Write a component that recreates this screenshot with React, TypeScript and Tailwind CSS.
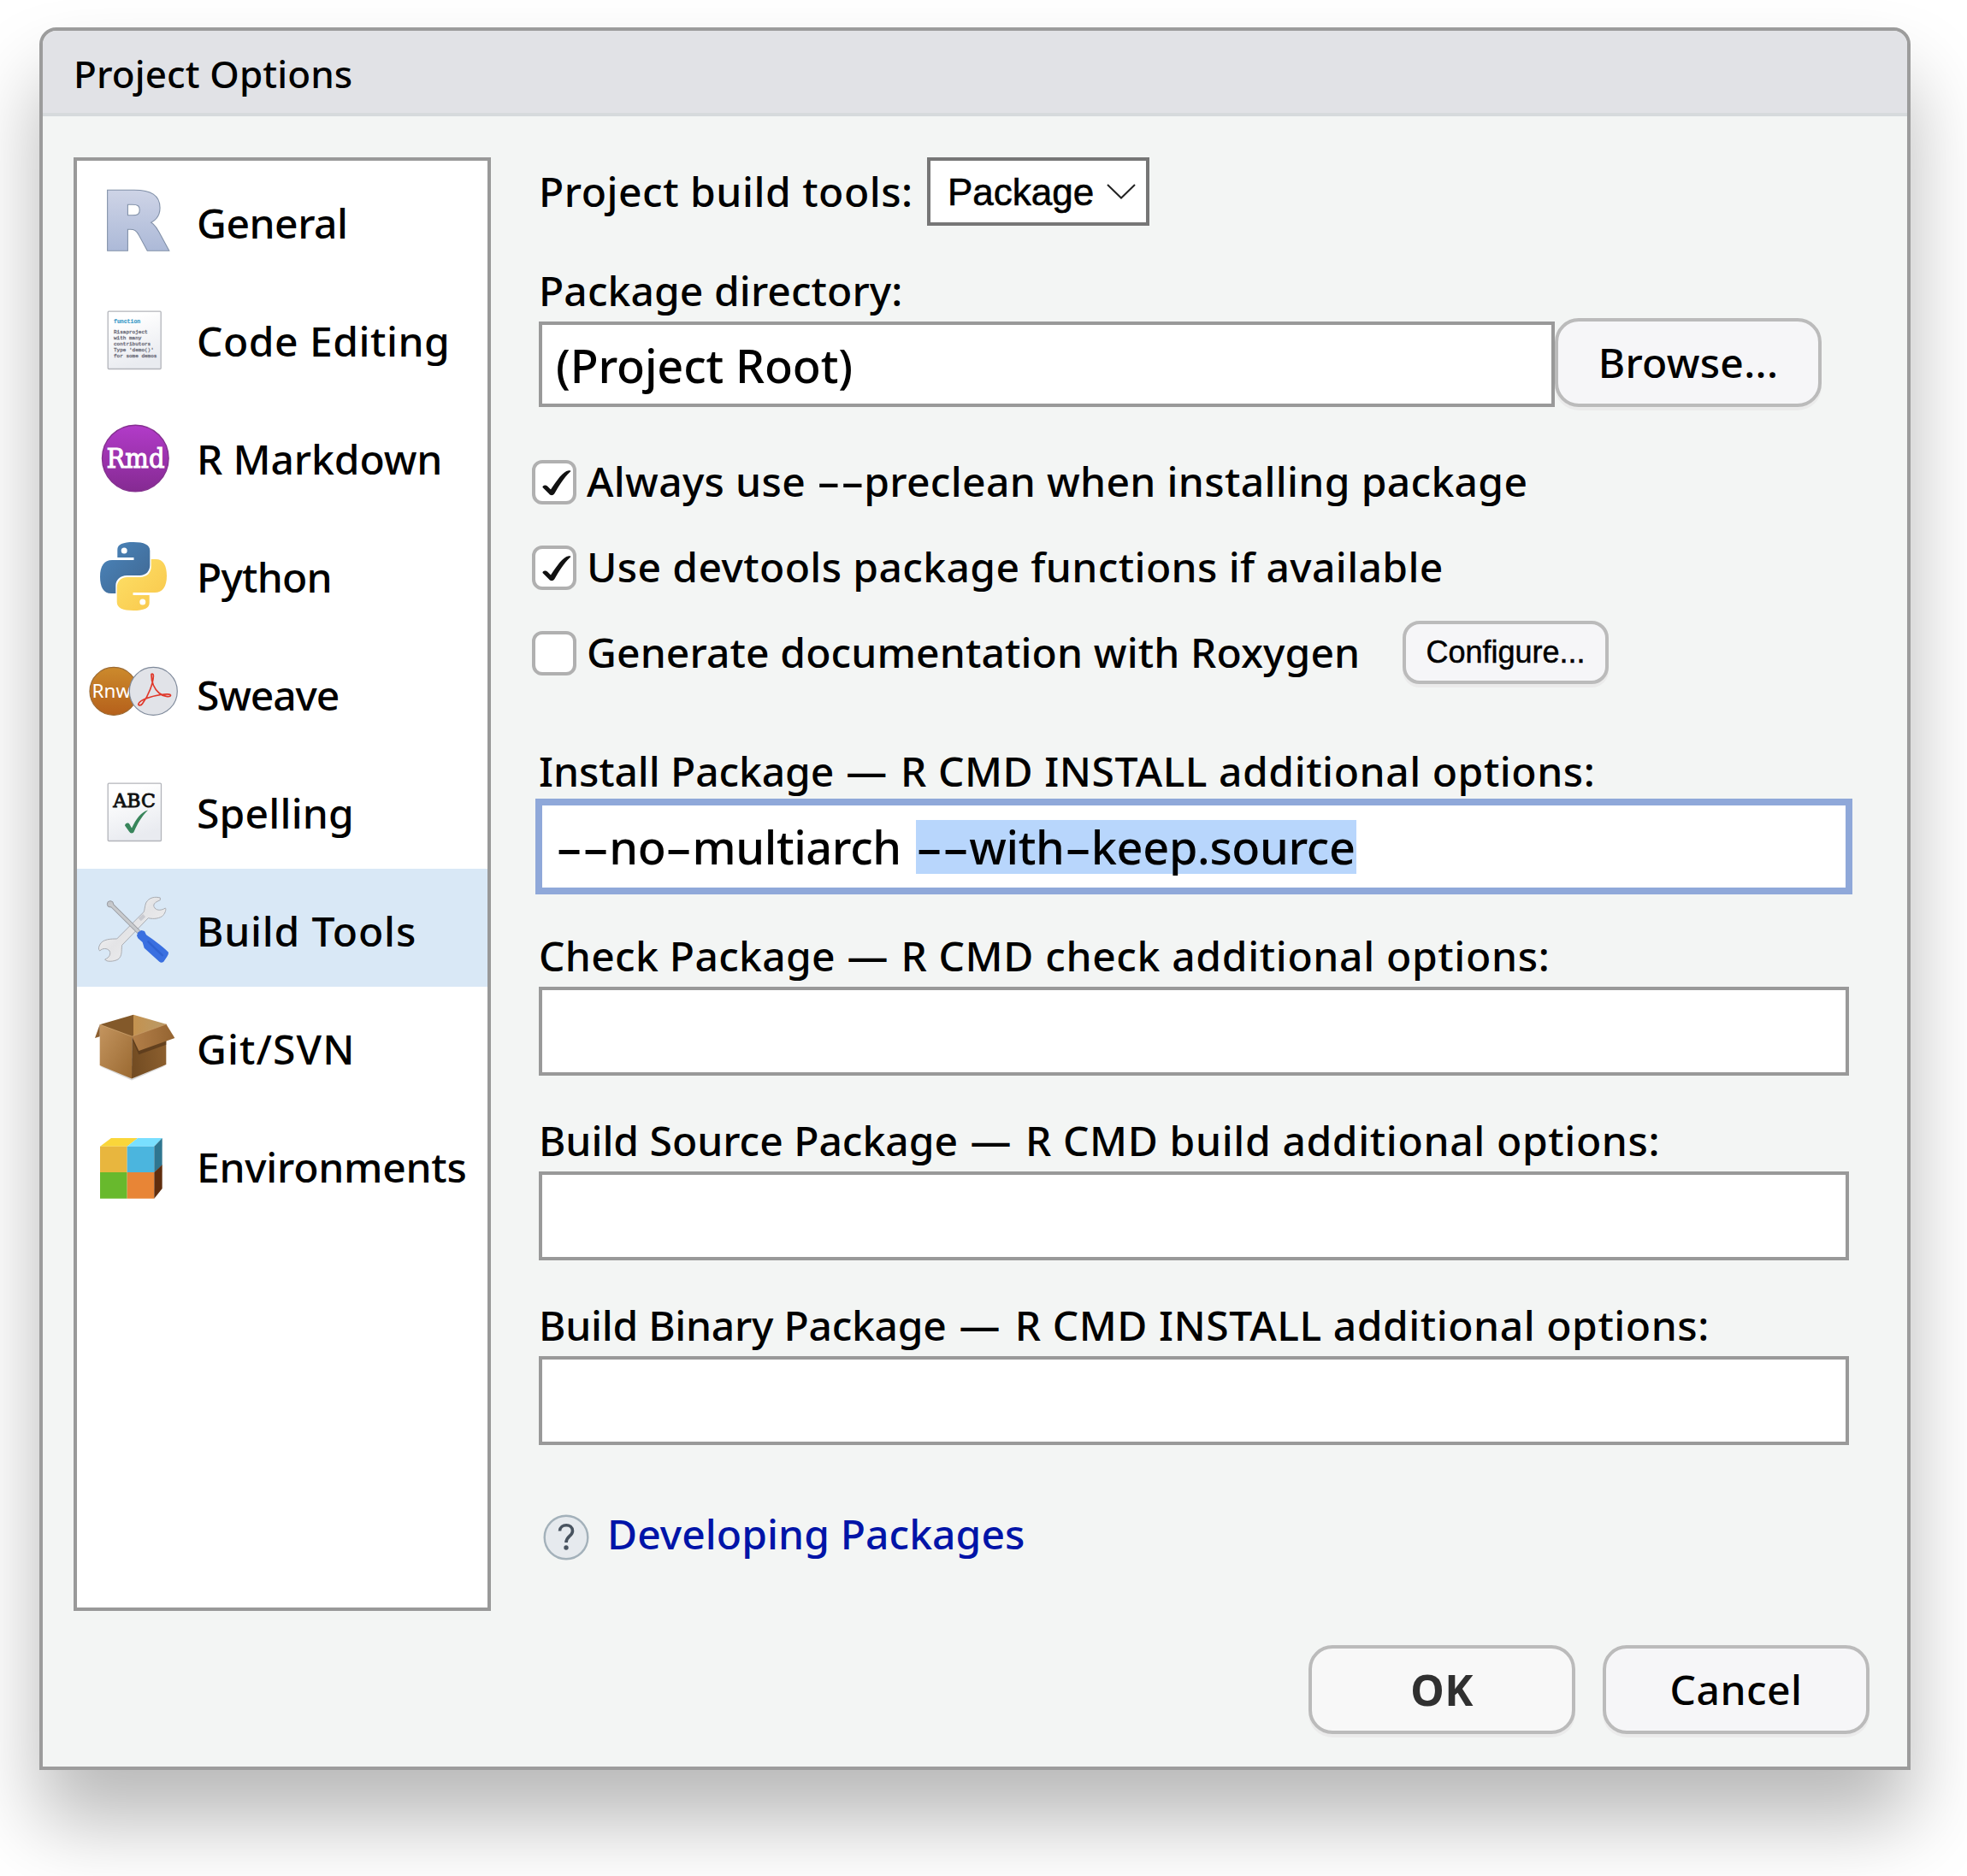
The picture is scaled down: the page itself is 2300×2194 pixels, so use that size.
import React from "react";

/* ---------- sidebar icons ---------- */

function IconFrame({ children }: { children: React.ReactNode }) {
  return (
    <svg viewBox="0 0 120 138" className="h-[138px] w-[120px] shrink-0">
      {children}
    </svg>
  );
}

function GeneralIcon() {
  return (
    <IconFrame>
      <defs>
        <linearGradient id="rFill" gradientUnits="userSpaceOnUse" x1="0" y1="-67" x2="0" y2="0">
          <stop offset="0" stopColor="#cdd3e6" />
          <stop offset="1" stopColor="#adbad8" />
        </linearGradient>
      </defs>
      <g
        transform="translate(19 103.3) scale(1.09 1)"
        className="font-['DejaVu_Sans',sans-serif] font-bold"
        fontSize="91.5"
      >
        <text stroke="#8190a8" strokeWidth="5.6" fill="#8190a8" aria-hidden="true">
          R
        </text>
        <text stroke="url(#rFill)" strokeWidth="3.6" fill="url(#rFill)">
          R
        </text>
      </g>
    </IconFrame>
  );
}

const CODE_LINES = ["Risaproject", "with many", "contributors", "Type 'demo()'", "for some demos"];

function CodeIcon() {
  return (
    <IconFrame>
      <defs>
        <linearGradient id="paper" x1="0" y1="0" x2="0.3" y2="1">
          <stop offset="0.2" stopColor="#ffffff" />
          <stop offset="1" stopColor="#e9ebf0" />
        </linearGradient>
      </defs>
      <rect x="26.2" y="38.2" width="62" height="67.3" rx="1" fill="url(#paper)" stroke="#b3b5bb" strokeWidth="1.3" />
      <text x="33" y="52" fontFamily="Liberation Mono" fontWeight="700" fontSize="6.5" fill="#3d9cc9" stroke="#3d9cc9" strokeWidth="0.2">
        function
      </text>
      {CODE_LINES.map((line, i) => (
        <text key={line} x="33" y={64 + i * 7} fontFamily="Liberation Mono" fontSize="6" fill="#6b6b78" stroke="#6b6b78" strokeWidth="0.3">
          {line}
        </text>
      ))}
    </IconFrame>
  );
}

function RmdIcon() {
  return (
    <IconFrame>
      <defs>
        <linearGradient id="rmdFill" x1="0" y1="0" x2="0" y2="1">
          <stop offset="0" stopColor="#b23bc9" />
          <stop offset="1" stopColor="#852a92" />
        </linearGradient>
      </defs>
      <circle cx="58.3" cy="72" r="38.8" fill="url(#rmdFill)" stroke="#84308f" strokeWidth="1.4" />
      <text
        x="24.5"
        y="82.6"
        fontFamily="DejaVu Serif"
        fontWeight="400"
        fontSize="32.5"
        fill="#fff"
        stroke="#fff"
        strokeWidth="1.1"
        textLength="68"
        lengthAdjust="spacingAndGlyphs"
      >
        Rmd
      </text>
    </IconFrame>
  );
}

const SNAKE =
  "M37.3 50V41C37.3 34.5 44 32 56 32C68.5 32 75.3 35 75.3 42V59C75.3 66 70.5 71 63.5 71H48.5C40.5 71 35.3 76 35.3 83V92H30C21 92 17 84.5 17 72.5C17 60 22 53 31 53H56.5V50Z";

function PythonIcon() {
  return (
    <IconFrame>
      <defs>
        <linearGradient id="pyBlue" x1="0" y1="0" x2="1" y2="1">
          <stop offset="0" stopColor="#4b86bd" />
          <stop offset="1" stopColor="#3f6690" />
        </linearGradient>
        <linearGradient id="pyYellow" x1="1" y1="1" x2="0" y2="0">
          <stop offset="0" stopColor="#fee168" />
          <stop offset="1" stopColor="#f8c64a" />
        </linearGradient>
      </defs>
      <path d={SNAKE} fill="url(#pyBlue)" />
      <circle cx="45.2" cy="42" r="3.5" fill="#fff" />
      <g transform="rotate(180 56 72)">
        <path d={SNAKE} fill="url(#pyYellow)" />
        <circle cx="45.2" cy="42" r="3.5" fill="#fff" />
      </g>
    </IconFrame>
  );
}

function SweaveIcon() {
  return (
    <IconFrame>
      <defs>
        <linearGradient id="rnwFill" x1="0" y1="0" x2="0" y2="1">
          <stop offset="0" stopColor="#cc8a2c" />
          <stop offset="1" stopColor="#b5601b" />
        </linearGradient>
      </defs>
      <circle cx="33" cy="68.4" r="28" fill="url(#rnwFill)" stroke="#9c6a33" strokeWidth="1.2" />
      <text x="7.5" y="75.5" fontFamily="Noto Sans" fontWeight="400" fontSize="22.5" fill="#fff">
        Rnw
      </text>
      <circle cx="79.3" cy="68.4" r="28" fill="#e1e3e8" stroke="#7f8a9b" strokeWidth="1.2" />
      <path
        d="M77 49.5C76.5 47.5 79.6 47.5 79.4 50.5C79 59 74 73 66.5 83C65 85.5 61 85.5 62 83C64 78.5 76 74.5 88 72.5C94 71.5 100 71.500 99.500 73.500C99 75.500 91 75 86 70.500C80 65 77 58 77 49.500Z"
        fill="none"
        stroke="#e0392b"
        strokeWidth="1.7"
      />
    </IconFrame>
  );
}

function SpellingIcon() {
  return (
    <IconFrame>
      <rect x="26.2" y="38.2" width="62.3" height="67.3" rx="1" fill="url(#paper)" stroke="#b3b5bb" strokeWidth="1.3" />
      <text
        x="32.3"
        y="66.2"
        fontFamily="DejaVu Serif"
        fontWeight="400"
        fontSize="22"
        fill="#111"
        stroke="#111"
        strokeWidth="0.9"
        textLength="49.5"
      >
        ABC
      </text>
      <path
        d="M46 87.5C46.5 84.5 50 83.5 51.5 86L54 90.5C59 80 65 71.5 73 69.5C65 77.5 60.5 86 57 94C55.5 97.5 52.5 97 51 94.5Z"
        fill="#38855b"
      />
    </IconFrame>
  );
}

function BuildToolsIcon() {
  return (
    <IconFrame>
      <defs>
        <linearGradient id="steel" x1="0" y1="0" x2="1" y2="0.9">
          <stop offset="0" stopColor="#ffffff" />
          <stop offset="0.5" stopColor="#e4e4e6" />
          <stop offset="1" stopColor="#f4f4f4" />
        </linearGradient>
      </defs>
      <g transform="translate(0 14) scale(0.33333)">
        <path
          d="M262 60C245 55 222 58 212 78C207 92 208 102 204 110L110 204C90 204 60 204 50 225C46 234 44 240 50 246C60 236 76 236 84 246C90 256 84 270 68 276C72 286 100 284 114 276C130 264 125 246 128 226L220 131C240 136 262 132 272 122C280 112 284 100 280 96C268 104 252 106 243 96C234 84 242 76 262 68Z"
          fill="url(#steel)"
          stroke="#a9acb2"
          strokeWidth="3"
          strokeLinejoin="round"
        />
        <path d="M190 137L206 122" stroke="#c9cad0" strokeWidth="13" />
        <path d="M88 82L190 183" stroke="#96999f" strokeWidth="15" />
        <circle cx="87" cy="82" r="11" fill="#c4c6ca" stroke="#96999f" strokeWidth="3" />
        <path d="M88 82L190 183" stroke="#c8cacd" strokeWidth="10" />
        <path
          d="M180 193L184 181L196 174L207 177L213 190C235 205 262 224 291 251Q292 258 286 266L274 284Q266 290 259 284L206 236L200 216L184 202Z"
          fill="#3a6fe0"
        />
        <path d="M220 214L270 262" stroke="#2f62d2" strokeWidth="7" strokeLinecap="round" />
      </g>
    </IconFrame>
  );
}

function BoxIcon() {
  return (
    <IconFrame>
      <defs>
        <linearGradient id="boxFront" x1="0" y1="0" x2="1" y2="1">
          <stop offset="0" stopColor="#c4955f" />
          <stop offset="1" stopColor="#9a6931" />
        </linearGradient>
        <linearGradient id="boxSide" x1="0" y1="0.5" x2="1" y2="0.3">
          <stop offset="0" stopColor="#734c22" />
          <stop offset="1" stopColor="#8d602f" />
        </linearGradient>
        <linearGradient id="boxFlap" x1="0" y1="0" x2="1" y2="0">
          <stop offset="0" stopColor="#b37f49" />
          <stop offset="1" stopColor="#946431" />
        </linearGradient>
        <linearGradient id="boxBack" x1="0" y1="0" x2="1" y2="0">
          <stop offset="0" stopColor="#c4924f" />
          <stop offset="1" stopColor="#b99a68" />
        </linearGradient>
      </defs>
      <g transform="translate(-20 -274) scale(0.33333 0.35714)">
        <path d="M112 1028L222 1074L340 1026Z" fill="#000" opacity="0.15" />
        <path d="M110 891L228 859V930L223 932Z" fill="#83592a" />
        <path d="M228 859L343 890L228 932Z" fill="url(#boxBack)" />
        <path d="M110 891L223 930L222 1068L110 1025Z" fill="url(#boxFront)" />
        <path d="M223 930L343 890V1022L222 1068Z" fill="url(#boxSide)" />
        <path d="M224 940L247 989L343 957V940Z" fill="#54361a" opacity="0.7" />
        <path d="M110 891L93 935L110 930Z" fill="#8c5f30" />
        <path d="M223 930L343 890L373 935L247 977Z" fill="url(#boxFlap)" />
        <path d="M110 891L223 930L343 890" fill="none" stroke="#c99d68" strokeWidth="2.5" />
      </g>
    </IconFrame>
  );
}

function EnvironmentsIcon() {
  return (
    <IconFrame>
      <g transform="translate(-20 -412) scale(0.33333 0.35714)">
        <path d="M111 1290L150 1263H243L206 1290Z" fill="#fad63a" />
        <path d="M206 1290L243 1263H329L301 1290Z" fill="#79dfff" />
        <path d="M111 1290H206V1375H111Z" fill="#e8b63e" />
        <path d="M206 1290H301V1375H206Z" fill="#4bb5de" />
        <path d="M111 1375H206V1461H111Z" fill="#68b92d" />
        <path d="M206 1375H301V1461H206Z" fill="#e88536" />
        <path d="M301 1290L329 1263V1352L301 1375Z" fill="#2f7690" />
        <path d="M301 1375L329 1350V1428L301 1461Z" fill="#5f2d0e" />
      </g>
    </IconFrame>
  );
}

/* ---------- shared pieces ---------- */

/** Wide hyphen, as used in command-line flags. */
function Dash() {
  return <span className="inline-block w-[0.577em] origin-left scale-x-[1.79] tracking-normal">-</span>;
}

function CheckBox({ checked }: { checked?: boolean }) {
  return (
    <span className="block size-[52px] shrink-0 rounded-xl border-4 border-[#b0b0b0] bg-white">
      {checked && (
        <svg viewBox="4 4 44 44" className="size-11">
          <path
            d="M12.500 32C12 29.500 16 28.500 18 30.500L22 34.500C29 24 36 13.500 43 12.300Q47 11.800 44.500 14C37 21 31 31 26.500 39C24.500 42 21.500 41.500 20 39.500Z"
            fill="#111"
          />
        </svg>
      )}
    </span>
  );
}

const BUTTON =
  "flex items-center justify-center border-4 border-[#bbbbbb] bg-[#f6f6f8] shadow-[0_4px_0_#ebebeb]";

const ITEMS = [
  { label: "General", icon: GeneralIcon, tracking: "tracking-[-0.48px]" },
  { label: "Code Editing", icon: CodeIcon, tracking: "tracking-[0.5px]" },
  { label: "R Markdown", icon: RmdIcon, tracking: "tracking-[-0.12px]" },
  { label: "Python", icon: PythonIcon, tracking: "tracking-[-0.79px]" },
  { label: "Sweave", icon: SweaveIcon, tracking: "tracking-[-1.15px]" },
  { label: "Spelling", icon: SpellingIcon, tracking: "tracking-[0.2px]" },
  { label: "Build Tools", icon: BuildToolsIcon, tracking: "tracking-[0.8px]", selected: true },
  { label: "Git/SVN", icon: BoxIcon, tracking: "tracking-[1.1px]" },
  { label: "Environments", icon: EnvironmentsIcon, tracking: "tracking-[-0.26px]" },
];

const FIELDS = [
  {
    name: "Install Package",
    command: "R CMD INSTALL additional options:",
    nameTracking: "tracking-[-0.09px]",
    dashTracking: "tracking-[1.6px]",
    commandTracking: "tracking-[0.55px]",
    focused: true,
  },
  {
    name: "Check Package",
    command: "R CMD check additional options:",
    nameTracking: "tracking-[0.31px]",
    dashTracking: "tracking-[1.15px]",
    commandTracking: "tracking-[0.65px]",
  },
  {
    name: "Build Source Package",
    command: "R CMD build additional options:",
    nameTracking: "tracking-[-0.02px]",
    dashTracking: "tracking-[2px]",
    commandTracking: "tracking-[0.63px]",
  },
  {
    name: "Build Binary Package",
    command: "R CMD INSTALL additional options:",
    nameTracking: "tracking-[-0.25px]",
    dashTracking: "tracking-[2.4px]",
    commandTracking: "tracking-[0.54px]",
  },
];

export default function App() {
  return (
    <div className="h-[2194px] w-[2300px] overflow-hidden bg-white pt-8 pl-[46px] font-['Noto_Sans',sans-serif] text-[48px] leading-none font-medium whitespace-nowrap text-black">
      <div className="flex h-[2038px] w-[2188px] flex-col rounded-t-[20px] border-4 border-[#9c9c9c] bg-[#f3f5f4] shadow-[0_60px_92px_rgba(0,0,0,0.28)]">
        <header className="flex h-[100px] shrink-0 items-center rounded-t-2xl border-b-4 border-[#d6dadc] bg-[#e1e2e6] pt-[3px] pl-9 text-[44px] tracking-[0.1px]">
          Project Options
        </header>

        <div className="flex gap-14 pt-12 pl-9">
          <nav className="h-[1700px] w-[488px] shrink-0 border-4 border-[#999999] bg-white">
            {ITEMS.map(({ label, icon: Icon, tracking, selected }) => (
              <div key={label} className={`flex h-[138px] items-center gap-2.5 pl-2.5 ${selected ? "bg-[#d9e8f6]" : ""}`}>
                <Icon />
                <span className={`pt-2 ${tracking}`}>{label}</span>
              </div>
            ))}
          </nav>

          <main className="flex w-[1532px] flex-col">
            <div className="flex h-20 items-center">
              <span className="w-[454px] tracking-[0.52px]">Project build tools:</span>
              <div className="flex h-20 w-[260px] items-center justify-between border-4 border-[#767676] bg-white pr-3 pl-5 font-['Liberation_Sans',sans-serif] text-[44px] font-normal [-webkit-text-stroke:0.6px_black]">
                <span className="w-[172px] pt-[2px] leading-[60px]">Package</span>
                <svg viewBox="0 0 34 20" className="h-5 w-[34px]">
                  <path d="M1 2L17 17.5L33 2" fill="none" stroke="#222" strokeWidth="2" />
                </svg>
              </div>
            </div>

            <div className="mt-10 flex h-[68px] items-center pt-[3px] tracking-[0.08px]">Package directory:</div>
            <div className="flex items-end">
              <div className="flex h-[100px] w-[1188px] items-center border-4 border-[#999999] bg-white pt-0.5 pl-4 text-[54px] tracking-[-0.15px]">
                (Project Root)
              </div>
              <div className={`${BUTTON} h-[104px] w-[312px] rounded-[28px] tracking-[0.3px]`}>Browse...</div>
            </div>

            <div className="mt-[62px] -ml-2 flex flex-col gap-12">
              <div className="flex h-[52px] items-center gap-3">
                <CheckBox checked />
                <span className="pb-0.5 tracking-[0.33px]">
                  Always use <Dash />
                  <Dash />
                  preclean when installing package
                </span>
              </div>
              <div className="flex h-[52px] items-center gap-3">
                <CheckBox checked />
                <span className="pb-0.5 tracking-[0.39px]">Use devtools package functions if available</span>
              </div>
              <div className="flex h-[52px] items-center">
                <CheckBox />
                <span className="w-[966px] pb-0.5 pl-3 tracking-[0.11px]">Generate documentation with Roxygen</span>
                <div
                  className={`${BUTTON} mb-0.5 h-[74px] w-[241px] rounded-[20px] font-['Liberation_Sans',sans-serif] text-[36px] font-normal [-webkit-text-stroke:0.5px_black]`}
                >
                  Configure...
                </div>
              </div>
            </div>

            <div className="mt-[74px] flex flex-col gap-[38px]">
              {FIELDS.map(({ name, command, nameTracking, dashTracking, commandTracking, focused }) => (
                <div key={name}>
                  <div className="flex h-[74px] items-center pt-0.5">
                    <span className="whitespace-pre">
                      <span className={nameTracking}>{name}</span>
                      <span className={dashTracking}>{" — "}</span>
                      <span className={commandTracking}>{command}</span>
                    </span>
                  </div>
                  {focused ? (
                    <div className="flex h-[104px] items-center border-4 border-[#8fa8d9] bg-white pl-4 text-[54px] leading-[63px] outline-4 outline-[#8fa8d9]">
                      <span className="w-[421px] tracking-[-0.4px]">
                        <Dash />
                        <Dash />
                        no
                        <Dash />
                        multiarch
                      </span>
                      <span className="w-[515px] bg-[#b8d6fc] tracking-[-0.35px]">
                        <Dash />
                        <Dash />
                        with
                        <Dash />
                        keep.source
                      </span>
                    </div>
                  ) : (
                    <div className="h-[104px] border-4 border-[#999999] bg-white" />
                  )}
                </div>
              ))}
            </div>

            <div className="mt-[81px] flex h-[54px] items-center pl-[5px]">
              <svg viewBox="0 0 54 54" className="size-[54px]">
                <circle cx="27" cy="27" r="25.3" fill="#e6eaee" stroke="#a3b1ba" strokeWidth="2.4" />
                <path
                  d="M19.5 19.5C20 10.5 34.500 10.500 34.500 19.500C34.500 25.500 27 25.500 27 33"
                  fill="none"
                  stroke="#48535f"
                  strokeWidth="3.6"
                />
                <circle cx="27" cy="39" r="2.7" fill="#48535f" />
              </svg>
              <span className="pb-2 pl-[21px] tracking-[0.07px] text-[#0014a8]">Developing Packages</span>
            </div>
          </main>
        </div>

        <footer className="mt-10 flex justify-end gap-8 pr-11">
          <div className="flex h-[104px] w-[312px] items-center justify-center rounded-[28px] border-4 border-[#bbbbbb] bg-[#f8f8f8] text-[50px] font-bold tracking-[0.5px] text-[#303030] shadow-[0_4px_0_#ebebeb]">
            OK
          </div>
          <div className={`${BUTTON} h-[104px] w-[312px] rounded-[28px] tracking-[0.45px]`}>Cancel</div>
        </footer>
      </div>
    </div>
  );
}
